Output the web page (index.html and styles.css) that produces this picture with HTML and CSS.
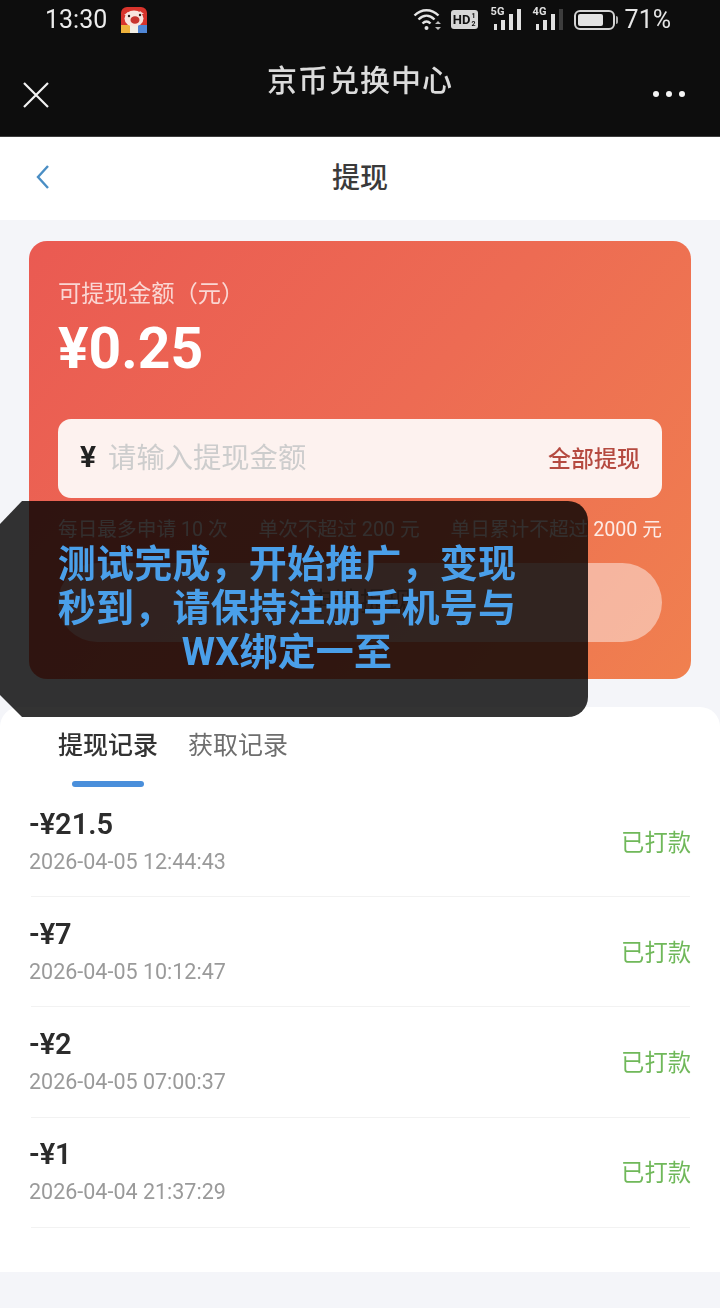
FILE: index.html
```html
<!DOCTYPE html>
<html lang="zh-CN">
<head>
<meta charset="utf-8">
<title>提现</title>
<link rel="stylesheet" href="styles.css">
</head>
<body>
<div class="screen">
  <header class="topbar">
    <div class="status">
      <div class="status-left">
        <span class="time">13:30</span>
        <svg class="app-icon" width="26" height="26" viewBox="0 0 26 26">
          <rect width="26" height="26" rx="6" fill="#d8342c"/>
          <rect y="18" width="9" height="8" fill="#eeb23c"/>
          <rect x="9" y="18" width="8" height="8" fill="#f2eee6"/>
          <rect x="17" y="18" width="9" height="8" fill="#4f86d6"/>
          <path d="M3 8l4-3 2 3zM23 7l-4-3-2 3z" fill="#f6d8d2"/>
          <ellipse cx="13" cy="11.500" rx="9.500" ry="8" fill="#f9e4de"/>
          <ellipse cx="14" cy="13" rx="4.500" ry="3.800" fill="#c8342f"/>
          <circle cx="8" cy="9" r="1.200" fill="#33201f"/>
          <circle cx="19" cy="8" r="1.200" fill="#33201f"/>
        </svg>
      </div>
      <div class="status-right">
        <svg class="wifi" width="30" height="24" viewBox="0 0 30 24" fill="none" stroke="#e4e4e4" stroke-width="2.400">
          <path d="M1.500 8.500C8.500 1.500 18.500 1.500 25.500 8.500"/>
          <path d="M5.500 12.500C10.500 7.500 16.500 7.500 21.500 12.500"/>
          <path d="M9.500 16.500C12 14 15 14 17.500 16.500"/>
          <circle cx="13.500" cy="21" r="2" fill="#e4e4e4" stroke="none"/>
          <path d="M22 17l3-3 3 3zM22 20l3 3 3-3z" fill="#bdbdbd" stroke="none"/>
        </svg>
        <span class="hd">HD<span class="hd-sub">1<br>2</span></span>
        <span class="signal">
          <span class="net">5G</span>
          <span class="bars"><i class="b1"></i><i class="b2"></i><i class="b3"></i><i class="b4"></i></span>
        </span>
        <span class="signal signal-last">
          <span class="net">4G</span>
          <span class="bars"><i class="b1"></i><i class="b2"></i><i class="b3"></i><i class="b4 off"></i></span>
        </span>
        <span class="battery"><span class="battery-fill"></span></span>
        <span class="battery-cap"></span>
        <span class="percent">71%</span>
      </div>
    </div>
    <div class="titlebar">
      <svg class="close" width="28" height="28" viewBox="0 0 28 28" fill="none" stroke="#f2f2f2" stroke-width="2.200">
        <path d="M2 2l24 24M26 2L2 26"/>
      </svg>
      <h1 class="app-title">京币兑换中心</h1>
      <div class="dots"><i></i><i></i><i></i></div>
    </div>
  </header>

  <nav class="nav">
    <svg class="back" width="16" height="26" viewBox="0 0 16 26" fill="none" stroke="#4a8ec4" stroke-width="2.400">
      <path d="M13 2L3 13l10 11"/>
    </svg>
    <h2 class="nav-title">提现</h2>
  </nav>

  <main class="content">
    <section class="card">
      <div class="label">可提现金额（元）</div>
      <div class="balance">¥0.25</div>
      <div class="input">
        <span class="input-currency">¥</span>
        <span class="placeholder">请输入提现金额</span>
        <span class="all">全部提现</span>
      </div>
      <div class="limits">
        <span>每日最多申请 10 次</span>
        <span>单次不超过 200 元</span>
        <span>单日累计不超过 2000 元</span>
      </div>
      <div class="submit">申请提现</div>
    </section>

    <section class="records">
      <div class="tabs">
        <div class="tab active">提现记录</div>
        <div class="tab">获取记录</div>
      </div>
      <div class="indicator"></div>
      <ul class="list">
        <li class="row">
          <div><div class="amount">-¥21.5</div><div class="date">2026-04-05 12:44:43</div></div>
          <span class="state">已打款</span>
        </li>
        <li class="row">
          <div><div class="amount">-¥7</div><div class="date">2026-04-05 10:12:47</div></div>
          <span class="state">已打款</span>
        </li>
        <li class="row">
          <div><div class="amount">-¥2</div><div class="date">2026-04-05 07:00:37</div></div>
          <span class="state">已打款</span>
        </li>
        <li class="row">
          <div><div class="amount">-¥1</div><div class="date">2026-04-04 21:37:29</div></div>
          <span class="state">已打款</span>
        </li>
      </ul>
    </section>
  </main>

  <div class="toast">
    <p class="toast-text">测试完成，开始推广，变现<br>秒到，请保持注册手机号与<br>WX绑定一至</p>
  </div>
</div>
</body>
</html>
```

FILE: styles.css
```css
* { box-sizing: border-box; }
html, body { margin: 0; padding: 0; }
body {
  background: #f4f5f9;
  font-family: Roboto, "Noto Sans CJK SC", "Noto Sans", sans-serif;
  color: #2e2e2e;
}
h1, h2, p, ul { margin: 0; padding: 0; font-weight: 400; }
ul { list-style: none; }

.screen {
  position: relative;
  width: 720px;
  height: 1308px;
  overflow: hidden;
  filter: blur(0.4px);
}

.topbar {
  height: 137px;
  background: #0d0d0d;
  border-bottom: 1px solid #3c3c3c;
  color: #f0f0f0;
}
.status {
  height: 40px;
  padding: 0 49px 0 45px;
  display: flex;
  align-items: center;
  justify-content: space-between;
}
.status-left { display: flex; align-items: center; gap: 14px; }
.time { font-size: 25px; line-height: 40px; color: #ececec; }
.app-icon { display: block; }
.status-right { display: flex; align-items: center; }
.wifi { display: block; margin: 0 8px 3px 0; }
.hd {
  display: flex;
  align-items: center;
  justify-content: center;
  width: 27px;
  height: 19px;
  border-radius: 3px;
  background: #d8d8d8;
  color: #111;
  font-size: 13px;
  line-height: 1;
  font-weight: 700;
  margin: 0 13px 1px 0;
}
.hd-sub { font-size: 7px; line-height: 8px; margin-left: 1px; }
.signal { position: relative; display: block; width: 30px; height: 22px; margin: 0 12px 3px 0; }
.signal-last { margin-right: 11px; }
.net {
  position: absolute;
  left: 0;
  top: -2px;
  font-size: 11px;
  line-height: 12px;
  font-weight: 700;
  color: #e0e0e0;
}
.bars { display: flex; align-items: flex-end; gap: 4px; height: 22px; padding-left: 3px; }
.bars i { display: block; width: 4px; background: #e0e0e0; }
.b1 { height: 6px; }
.b2 { height: 10px; }
.b3 { height: 16px; }
.b4 { height: 21px; }
.bars .off { background: #3d3d3d; }
.battery {
  display: block;
  width: 41px;
  height: 20px;
  margin-bottom: 1px;
  border: 2px solid #d4d4d4;
  border-radius: 6px;
  padding: 2px;
}
.battery-fill { display: block; width: 25px; height: 100%; border-radius: 2px; background: #e2e2e2; }
.battery-cap { display: block; width: 2px; height: 8px; margin: 0 7px 1px 1px; background: #b0b0b0; border-radius: 0 2px 2px 0; }
.percent { font-size: 25px; line-height: 40px; color: #e6e6e6; }

.titlebar {
  position: relative;
  height: 96px;
  display: flex;
  align-items: flex-start;
  justify-content: space-between;
  padding: 0 35px 0 22px;
}
.close { display: block; margin-top: 41px; }
.app-title {
  position: absolute;
  left: 0;
  right: 0;
  top: 19px;
  text-align: center;
  font-size: 30px;
  line-height: 44px;
  letter-spacing: 1px;
  font-weight: 500;
  color: #dcdcdc;
}
.dots { display: flex; gap: 7px; margin-top: 51px; }
.dots i { display: block; width: 6px; height: 6px; border-radius: 50%; background: #f4f4f4; }

.nav {
  position: relative;
  height: 83px;
  background: #fff;
  display: flex;
  align-items: center;
  justify-content: center;
}
.back { position: absolute; left: 35px; top: 27px; }
.nav-title { font-size: 28px; line-height: 40px; font-weight: 500; color: #3a3a3a; }

.content { padding-top: 21px; }

.card {
  margin: 0 29px;
  height: 438px;
  padding: 33px 29px 0;
  border-radius: 18px;
  background: linear-gradient(130deg, #ea5a52 0%, #ed6b53 50%, #f0804f 100%);
}
.label { font-size: 23.300px; line-height: 40px; color: rgba(255,255,255,0.75); }
.balance {
  font-size: 57px;
  line-height: 70px;
  font-weight: 700;
  color: #fff;
}
.input {
  margin-top: 35px;
  height: 79px;
  padding: 0 22px 4px;
  border-radius: 13px;
  background: #fdf2ef;
  display: flex;
  align-items: center;
}
.input-currency { font-size: 30px; font-weight: 700; color: #222; margin-right: 12px; }
.placeholder { font-size: 28.300px; padding-bottom: 2px; color: #cdcdcd; flex: 1; }
.all { font-size: 23px; font-weight: 500; color: #b54a40; }
.limits {
  margin-top: 14px;
  display: flex;
  justify-content: space-between;
  font-size: 19.700px;
  line-height: 36px;
  color: rgba(255,255,255,0.85);
}
.submit {
  margin-top: 15px;
  height: 79px;
  border-radius: 40px;
  background: rgba(255,255,255,0.45);
  text-align: center;
  font-size: 26px;
  line-height: 79px;
  color: #a87868;
}

.records {
  margin-top: 28px;
  height: 565px;
  background: #fff;
  border-radius: 20px 20px 0 0;
}
.tabs { display: flex; gap: 30px; padding: 19px 0 0 58px; }
.tab { font-size: 25px; line-height: 40px; color: #6e6e6e; }
.tab.active { color: #333; font-weight: 500; }
.indicator {
  width: 72px;
  height: 6px;
  margin: 15px 0 0 72px;
  border-radius: 3px;
  background: #4a8fdb;
}
.list { margin: 0 30px 0 31px; }
.row {
  height: 110.400px;
  display: flex;
  align-items: center;
  justify-content: space-between;
  border-bottom: 1px solid #f2f2f2;
}
.row:first-child { height: 110px; }
.amount { margin: 0 0 2px -2px; font-size: 29px; line-height: 38px; font-weight: 600; color: #2c2c2c; }
.date { margin-left: -2px; font-size: 21.500px; line-height: 34px; color: #9a9a9a; }
.state { margin-right: -1px; padding-top: 2px; font-size: 23.300px; line-height: 34px; color: #70b85a; }

.toast {
  position: absolute;
  left: 0;
  top: 501px;
  width: 588px;
  height: 216px;
  padding: 41px 0 0 0;
  border-radius: 20px;
  background: rgba(0,0,0,0.8);
  clip-path: polygon(22px 0, 100% 0, 100% 100%, 22px 100%, 0 194px, 0 23px);
}
.toast-text {
  width: 574px;
  text-align: center;
  font-size: 38px;
  line-height: 44px;
  letter-spacing: 0.2px;
  font-weight: 700;
  color: #4a9fe9;
}
```
